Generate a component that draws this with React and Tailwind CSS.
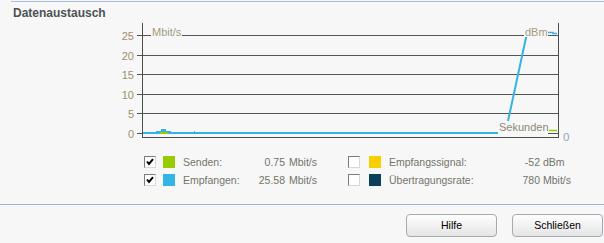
const legendLeft = [
  { label: 'Senden:', value: '0.75', unit: 'Mbit/s', color: 'bg-[#99cc00]', checked: true },
  { label: 'Empfangen:', value: '25.58', unit: 'Mbit/s', color: 'bg-[#33b4e4]', checked: true },
];

const legendRight = [
  { label: 'Empfangssignal:', value: '-52', unit: 'dBm', color: 'bg-[#f9cf00]', checked: false },
  { label: 'Übertragungsrate:', value: '780', unit: 'Mbit/s', color: 'bg-[#0b3f5a]', checked: false },
];

function Checkbox({ checked }) {
  return (
    <span className="w-[12px] h-[12px] shrink-0 bg-white border border-t-[#7b7b7b] border-l-[#7b7b7b] border-r-[#d8d8d8] border-b-[#d8d8d8] flex items-center justify-center">
      {checked && (
        <svg width="8" height="8" viewBox="0 0 8 8">
          <path d="M1 3.5 L3 6 L7 1.2" fill="none" stroke="#000" strokeWidth="2" />
        </svg>
      )}
    </span>
  );
}

function Chart() {
  const grid = [35.5, 55.5, 74.5, 94.5, 113.5, 133.5];
  const labels = ['25', '20', '15', '10', '5', '0'];
  return (
    <svg width="604" height="125" viewBox="0 20 604 125" className="block">
      {/* grid lines */}
      {grid.map((y) => (
        <line key={y} x1="137" y1={y} x2="558" y2={y} stroke="#545454" strokeWidth="1" />
      ))}
      {/* axes */}
      <line x1="142.5" y1="23" x2="142.5" y2="138" stroke="#4d4d4d" />
      <line x1="142" y1="137.5" x2="559" y2="137.5" stroke="#4d4d4d" />
      <line x1="558.5" y1="23" x2="558.5" y2="138" stroke="#4d4d4d" />

      {grid.map((y, i) => (
        <text key={i} x="134" y={y + 4} textAnchor="end" fontSize="11" fill="#9c8e6e">
          {labels[i]}
        </text>
      ))}

      {/* data */}
      <path d="M143 133 H498" stroke="#35b3e3" strokeWidth="2" fill="none" />
      <rect x="156" y="131" width="15" height="2" fill="#35b3e3" />
      <rect x="161" y="129" width="5" height="2" fill="#35b3e3" />
      <rect x="160" y="132" width="8" height="2" fill="#99cc00" />
      <rect x="194" y="131" width="1" height="2" fill="#35b3e3" />
      <line x1="508" y1="121" x2="527" y2="33" stroke="#35b3e3" strokeWidth="2" />

      {/* label backgrounds */}
      <rect x="151" y="27" width="31" height="10" fill="#f7f7f7" />
      <rect x="524" y="27" width="24" height="10" fill="#f7f7f7" />
      <rect x="498" y="121" width="50" height="14" fill="#f7f7f7" />

      <text x="152" y="36" fontSize="11" fill="#a39a80">Mbit/s</text>
      <text x="525" y="36" fontSize="11" fill="#a39a80">dBm</text>
      <text x="499" y="131" fontSize="11" fill="#8c877a">Sekunden</text>

      <path d="M548 32.5 H553 V33.5 H557" stroke="#35b3e3" strokeWidth="1.5" fill="none" />
      <path d="M549 130.5 H557" stroke="#99cc00" strokeWidth="1.5" fill="none" />

      <text x="563" y="141" fontSize="11.5" fill="#93a6bf">0</text>
    </svg>
  );
}

export default function App() {
  return (
    <div className="w-[604px] h-[243px] bg-[#f7f7f7] overflow-hidden font-['Liberation_Sans',sans-serif]">
      <div className="mt-px ml-[11px] h-px bg-[#a8c0dc]" />
      <h2 className="mt-[4px] ml-[13px] text-[12px] leading-[14px] font-bold text-[#4b5355]">Datenaustausch</h2>

      <Chart />

      {/* Legend */}
      <div className="mt-[11px] ml-[144px] flex flex-col gap-[6px] text-[10.5px] leading-[12px] text-[#74746a]">
        {legendLeft.map((l, i) => {
          const r = legendRight[i];
          return (
            <div key={l.label} className="flex items-center h-[12px]">
              <div className="flex items-center w-[204px]">
                <Checkbox checked={l.checked} />
                <span className={`ml-[7px] w-[12px] h-[12px] ${l.color}`} />
                <span className="ml-[8px] w-[72px] whitespace-nowrap">{l.label}</span>
                <span className="w-[30px] text-right">{l.value}</span>
                <span className="ml-[4px]">{l.unit}</span>
              </div>
              <div className="flex items-center">
                <Checkbox checked={r.checked} />
                <span className={`ml-[9px] w-[12px] h-[12px] ${r.color}`} />
                <span className="ml-[8px] w-[120px] whitespace-nowrap">{r.label}</span>
                <span className="w-[31px] text-right">{r.value}</span>
                <span className="ml-[3px]">{r.unit}</span>
              </div>
            </div>
          );
        })}
      </div>

      <div className="mt-[18px] h-px bg-[#94b5d7]" />

      <div className="mt-[9px] flex justify-end gap-[15px] pr-px">
        <button className="w-[91px] h-[23px] rounded-[4px] border border-[#a2aab2] bg-linear-to-b from-[#fefefe] to-[#e5e5e5] text-[10.5px] text-black">
          Hilfe
        </button>
        <button className="w-[91px] h-[23px] rounded-[4px] border border-[#a2aab2] bg-linear-to-b from-[#fefefe] to-[#e5e5e5] text-[10.5px] text-black">
          Schließen
        </button>
      </div>
    </div>
  );
}
